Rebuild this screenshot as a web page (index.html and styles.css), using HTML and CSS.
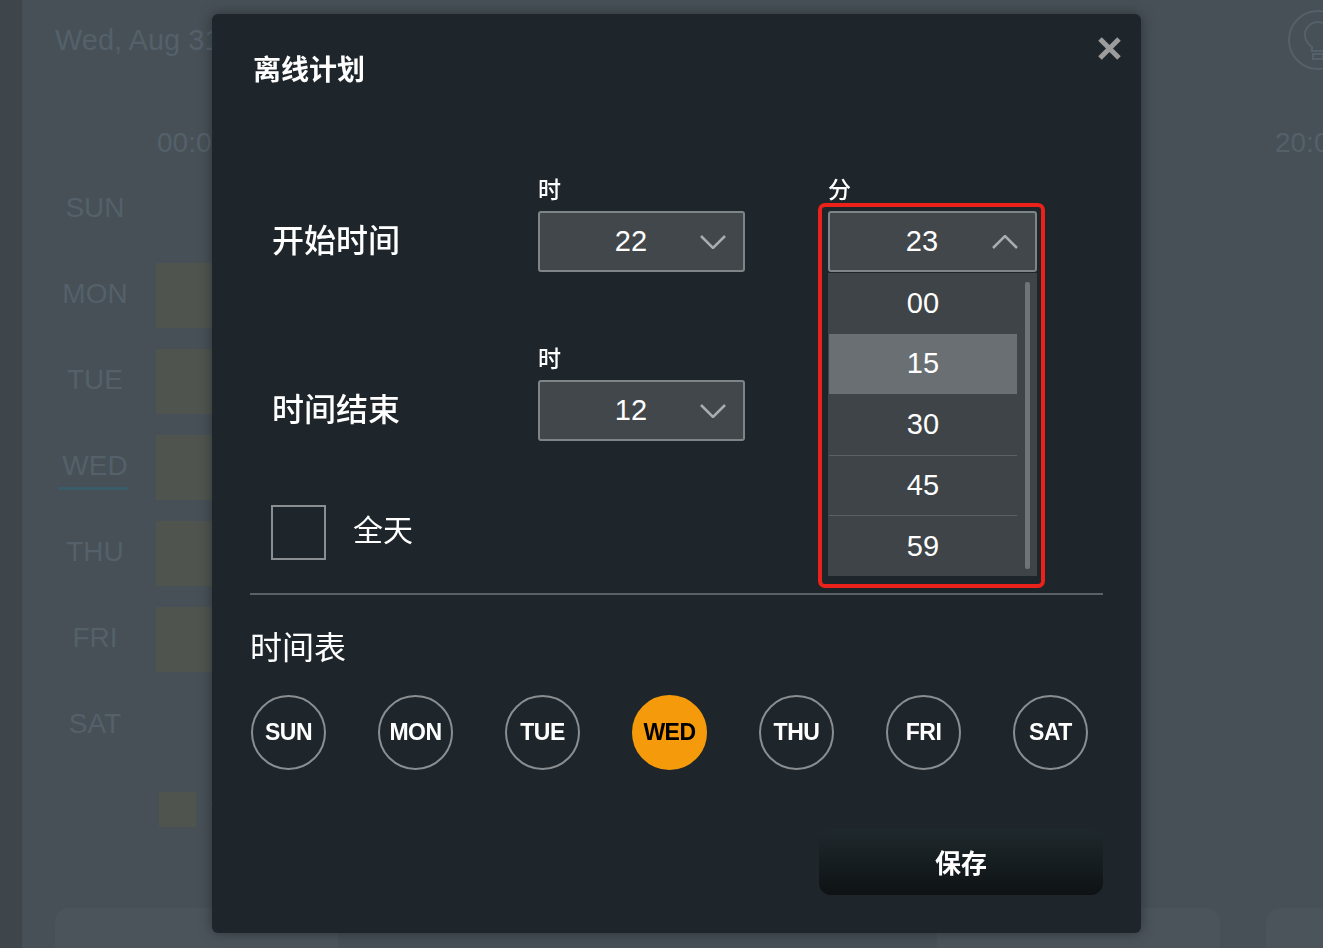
FILE: index.html
```html
<!DOCTYPE html>
<html lang="zh-CN">
<head>
<meta charset="utf-8">
<title>离线计划</title>
<link rel="stylesheet" href="styles.css">
</head>
<body>
<div class="page">
  <aside class="rail"></aside>
  <main class="main">
    <header class="top">
      <span class="date">Wed, Aug 31</span>
      <svg class="bulb" viewBox="0 0 62 62" aria-hidden="true">
        <circle cx="31" cy="31" r="29" fill="none" stroke="#55616a" stroke-width="2"/>
        <path d="M25 38c-4-3-7-7-7-12a13 13 0 0 1 26 0c0 5-3 9-7 12v4H25z" fill="none" stroke="#55616a" stroke-width="2"/>
        <rect x="26" y="45" width="10" height="5" fill="none" stroke="#55616a" stroke-width="2"/>
      </svg>
    </header>
    <div class="axis">
      <span>00:00</span><span>04:00</span><span>08:00</span><span>12:00</span><span>16:00</span><span>20:00</span>
    </div>
    <div class="rows">
      <div class="row"><span class="day">SUN</span><div class="track"></div></div>
      <div class="row"><span class="day">MON</span><div class="track"><div class="bar"></div></div></div>
      <div class="row"><span class="day">TUE</span><div class="track"><div class="bar"></div></div></div>
      <div class="row"><span class="day today">WED</span><div class="track"><div class="bar"></div></div></div>
      <div class="row"><span class="day">THU</span><div class="track"><div class="bar"></div></div></div>
      <div class="row"><span class="day">FRI</span><div class="track"><div class="bar"></div></div></div>
      <div class="row"><span class="day">SAT</span><div class="track"></div></div>
    </div>
    <div class="legend"><span class="swatch"></span><span>离线</span></div>
    <div class="actions">
      <button class="ghost-btn clear">全部清除</button>
      <button class="ghost-btn">取消</button>
      <button class="ghost-btn">应用</button>
    </div>
  </main>
</div>

<section class="modal" role="dialog" aria-label="离线计划">
  <h2 class="modal-title">离线计划</h2>
  <button class="close" aria-label="关闭">
    <svg viewBox="0 0 25 25" width="25" height="25"><path d="M3 3L22 22M22 3L3 22" stroke="#9c9c9c" stroke-width="5" fill="none"/></svg>
  </button>

  <div class="form">
    <div class="time-row">
      <div class="row-label">开始时间</div>
      <div class="field">
        <div class="field-label">时</div>
        <div class="select-wrap">
          <div class="select">
            <span class="select-value">22</span>
            <svg class="chev" viewBox="0 0 26 14"><polyline points="1,1 13,13 25,1" fill="none" stroke="#a9adb0" stroke-width="2.5"/></svg>
          </div>
        </div>
      </div>
      <div class="field minute">
        <div class="field-label">分</div>
        <div class="select-wrap">
          <div class="select">
            <span class="select-value">23</span>
            <svg class="chev" viewBox="0 0 26 14"><polyline points="1,13 13,1 25,13" fill="none" stroke="#a9adb0" stroke-width="2.5"/></svg>
          </div>
          <div class="dropdown">
            <ul class="options">
              <li>00</li>
              <li class="hover">15</li>
              <li>30</li>
              <li class="sep">45</li>
              <li class="sep">59</li>
            </ul>
            <div class="scrollbar"><div class="thumb"></div></div>
          </div>
          <div class="annot"></div>
        </div>
      </div>
    </div>

    <div class="time-row">
      <div class="row-label">时间结束</div>
      <div class="field">
        <div class="field-label">时</div>
        <div class="select-wrap">
          <div class="select">
            <span class="select-value">12</span>
            <svg class="chev" viewBox="0 0 26 14"><polyline points="1,1 13,13 25,1" fill="none" stroke="#a9adb0" stroke-width="2.5"/></svg>
          </div>
        </div>
      </div>
    </div>

    <label class="allday">
      <span class="check"></span>
      <span class="allday-text">全天</span>
    </label>
  </div>

  <div class="divider"></div>

  <div class="section-title">时间表</div>
  <div class="days">
    <button class="day-btn">SUN</button>
    <button class="day-btn">MON</button>
    <button class="day-btn">TUE</button>
    <button class="day-btn on">WED</button>
    <button class="day-btn">THU</button>
    <button class="day-btn">FRI</button>
    <button class="day-btn">SAT</button>
  </div>

  <button class="save">保存</button>
</section>
</body>
</html>
```

FILE: styles.css
```css
* { box-sizing: border-box; }

html, body {
  margin: 0;
  padding: 0;
}

body {
  width: 1323px;
  height: 948px;
  overflow: hidden;
  background: #465056;
  font-family: "Liberation Sans", "Noto Sans CJK SC", sans-serif;
}

/* ---------- dimmed background page ---------- */
.page {
  display: flex;
  height: 948px;
  overflow: hidden;
}

.rail {
  width: 22px;
  flex-shrink: 0;
  background: #3e464c;
}

.main {
  flex: 1;
  min-width: 0;
  padding-left: 33px;
  background: #465056;
  color: #54606a;
  overflow: hidden;
}

.top {
  height: 80px;
  display: flex;
  align-items: center;
  justify-content: space-between;
}

.date {
  font-size: 29px;
}

.bulb {
  width: 62px;
  height: 62px;
  flex-shrink: 0;
  margin-right: -26px;
}

.axis {
  height: 85px;
  padding: 41px 0 0 102px;
  display: grid;
  grid-template-columns: repeat(6, 223.6px);
  font-size: 28px;
  line-height: 44px;
}

.row {
  height: 86px;
  display: grid;
  grid-template-columns: 80px 1fr;
  column-gap: 21px;
}

.day {
  display: flex;
  align-items: center;
  justify-content: center;
  font-size: 28px;
}

.day.today {
  background: linear-gradient(#3a5b6a, #3a5b6a) 3px calc(100% - 19px) / 70px 3px no-repeat;
}

.track {
  padding-top: 12px;
}

.bar {
  width: 140px;
  height: 65px;
  background: #4f544f;
}

.legend {
  margin-top: 25px;
  padding-left: 104px;
  display: flex;
  align-items: center;
  gap: 14px;
  font-size: 22px;
}

.swatch {
  width: 37px;
  height: 35px;
  background: #4f544f;
}

.actions {
  margin-top: 81px;
  display: flex;
  gap: 46px;
}

.ghost-btn {
  flex-shrink: 0;
  width: 283px;
  height: 90px;
  padding: 18px 0 0;
  border: 0;
  border-radius: 14px;
  background: #4a545a;
  color: #5e686f;
  font-family: inherit;
  font-size: 26px;
  line-height: 30px;
  text-align: center;
  vertical-align: top;
}

.ghost-btn.clear {
  margin-right: 553px;
}

/* ---------- modal ---------- */
.modal {
  position: fixed;
  left: 212px;
  top: 14px;
  width: 929px;
  padding: 39px 38px 38px 38px;
  background: #1e262b;
  border-radius: 6px;
  box-shadow: 0 0 14px rgba(0, 0, 0, 0.35);
  color: #fff;
}

.modal-title {
  margin: 0 0 0 3px;
  font-size: 28px;
  line-height: 36px;
  font-weight: 700;
}

.close {
  position: absolute;
  top: 22px;
  right: 19px;
  width: 25px;
  height: 25px;
  padding: 0;
  border: 0;
  background: none;
}

.close svg { display: block; }

.form {
  margin-top: 89px;
  padding-left: 22px;
}

.time-row {
  display: flex;
  align-items: flex-end;
}

.time-row + .time-row {
  margin-top: 75px;
}

.row-label {
  width: 266px;
  height: 61px;
  line-height: 61px;
  font-size: 32px;
  font-weight: 500;
}

.field {
  width: 207px;
}

.field.minute {
  width: 209px;
  margin-left: 83px;
}

.field-label {
  font-size: 23px;
  line-height: 24px;
  margin-bottom: 9px;
  font-weight: 500;
}

.select-wrap {
  position: relative;
}

.select {
  height: 61px;
  display: flex;
  align-items: center;
  padding: 0 17px 0 22px;
  border: 2px solid #7f8487;
  border-radius: 3px;
  background: #41474b;
}

.select-value {
  flex: 1;
  text-align: center;
  font-size: 29px;
}

.chev {
  width: 26px;
  height: 14px;
  flex-shrink: 0;
}

.dropdown {
  position: absolute;
  top: calc(100% + 1px);
  left: 0;
  right: 0;
  z-index: 2;
  display: flex;
  background: #3e4448;
}

.options {
  flex: 1;
  margin: 0;
  padding: 0 0 0 1px;
  list-style: none;
}

.options li {
  height: 60.6px;
  display: flex;
  align-items: center;
  justify-content: center;
  font-size: 29px;
}

.options li.hover {
  background: #6a6f73;
}

.options li.sep {
  border-top: 1px solid #5b6064;
}

.scrollbar {
  width: 20px;
  padding: 9px 7px 7px 8px;
}

.thumb {
  height: 100%;
  background: #6f7478;
  border-radius: 2px;
}

.annot {
  position: absolute;
  top: -8px;
  left: -10px;
  width: 227px;
  height: 385px;
  border: 4px solid #ec2119;
  border-radius: 7px;
  z-index: 3;
  pointer-events: none;
}

.allday {
  margin-top: 64px;
  margin-left: -1px;
  display: flex;
  align-items: center;
  gap: 27px;
}

.check {
  width: 55px;
  height: 55px;
  border: 2px solid #8b8f92;
}

.allday-text {
  font-size: 30px;
  line-height: 30px;
  margin-top: -4px;
}

.divider {
  margin-top: 33px;
  height: 2px;
  background: #5b6266;
}

.section-title {
  margin-top: 33px;
  font-size: 32px;
  line-height: 40px;
}

.days {
  margin-top: 27px;
  padding-left: 1px;
  display: flex;
  gap: 52px;
}

.day-btn {
  width: 75px;
  height: 75px;
  padding: 0;
  display: flex;
  align-items: center;
  justify-content: center;
  border: 2px solid #8a8e91;
  border-radius: 50%;
  background: transparent;
  color: #fff;
  font-family: "Liberation Sans", sans-serif;
  font-size: 23px;
  font-weight: 700;
  letter-spacing: -0.5px;
}

.day-btn.on {
  background: #f59b0b;
  border-color: #f59b0b;
  color: #000;
}

.save {
  display: block;
  width: 284px;
  height: 67px;
  margin: 58px 0 0 auto;
  border: 0;
  border-radius: 12px;
  background: linear-gradient(#1f292d, #0e1214);
  color: #fff;
  font-family: "Liberation Sans", "Noto Sans CJK SC", sans-serif;
  font-size: 26px;
  font-weight: 700;
}
```
